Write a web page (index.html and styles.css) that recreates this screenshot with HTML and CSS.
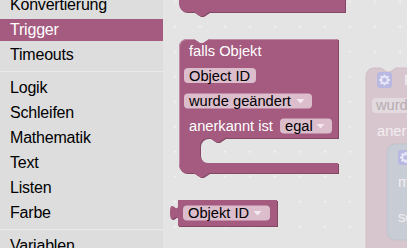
FILE: index.html
```html
<!DOCTYPE html>
<html lang="de">
<head>
    <meta charset="UTF-8">
    <title>Skript-Editor</title>
    <link rel="stylesheet" href="styles.css">
</head>
<body>
    <div class="editor">
        <div class="toolbox">
            <div class="tree">
                <div class="row">Konvertierung</div>
                <div class="row selected">Trigger</div>
                <div class="row">Timeouts</div>
                <div class="sep"></div>
                <div class="row">Logik</div>
                <div class="row">Schleifen</div>
                <div class="row">Mathematik</div>
                <div class="row">Text</div>
                <div class="row">Listen</div>
                <div class="row">Farbe</div>
                <div class="sep"></div>
                <div class="row">Variablen</div>
            </div>
        </div>

        <div class="workspace">
            <svg class="canvas" width="244" height="248" viewBox="163 0 244 248">
                <defs>
                    <pattern id="grid" patternUnits="userSpaceOnUse" x="162.5" y="14.2" width="25" height="25">
                        <path class="grid-line" d="M11 12.5H14M12.5 11V14"/>
                    </pattern>
                </defs>
                <rect x="163" y="0" width="244" height="248" fill="url(#grid)"/>

                <!-- block cut off at the top -->
                <path class="dark" transform="translate(1,1)" d="M179 -10V4a8 8 0 0 0 8 8H194l6 4 3 0 6-4H345V-10Z"/>
                <path class="block" d="M179 -10V4a8 8 0 0 0 8 8H194l6 4 3 0 6-4H345V-10Z"/>

                <!-- falls Objekt -->
                <path class="dark" transform="translate(1,1)" d="M179 47a8 8 0 0 1 8-8H194l6 4 3 0 6-4H338V138H225l-6 4-3 0-6-4H208a8 8 0 0 0-8 8V155a8 8 0 0 0 8 8H338V173H209l-6 4-3 0-6-4H187a8 8 0 0 1-8-8Z"/>
                <path class="block" d="M179 47a8 8 0 0 1 8-8H194l6 4 3 0 6-4H338V138H225l-6 4-3 0-6-4H208a8 8 0 0 0-8 8V155a8 8 0 0 0 8 8H338V173H209l-6 4-3 0-6-4H187a8 8 0 0 1-8-8Z"/>
                <path class="light" d="M179.5 165V47a7.5 7.5 0 0 1 7.5-7.5H194M209.5 39.5H337.5"/>

                <text class="label" x="189" y="56">falls Objekt</text>

                <rect class="field" x="184" y="68" width="72" height="15" rx="4"/>
                <text class="value" x="189" y="80.5">Object ID</text>

                <rect class="field" x="184" y="93.5" width="128" height="15" rx="4"/>
                <text class="value" x="189" y="106">wurde geändert</text>
                <path class="arrow" d="M296.5 99h8l-4 4.5z"/>

                <text class="label" x="189" y="131">anerkannt ist</text>
                <rect class="field" x="280" y="118.5" width="52" height="15" rx="4"/>
                <text class="value" x="285" y="131">egal</text>
                <path class="arrow" d="M316.5 124h8l-4 4.5z"/>

                <!-- Objekt ID value block -->
                <path class="dark" transform="translate(1,1)" d="M178 200H277V226H178V220c0-10-8 8-8-7.5s8 2.5 8-7.5Z"/>
                <path class="block" d="M178 200H277V226H178V220c0-10-8 8-8-7.5s8 2.5 8-7.5Z"/>
                <rect class="field" x="183" y="205.5" width="87" height="15" rx="4"/>
                <text class="value" x="188" y="218">Objekt ID</text>
                <path class="arrow" d="M253.5 211h8l-4 4.5z"/>

                <!-- faded block on the right -->
                <path class="ghost" d="M366 76a8 8 0 0 1 8-8H381l6 4 3 0 6-4H420V260H366Z"/>
                <rect class="ghost-icon" x="377" y="72" width="15" height="16" rx="3"/>
                <g class="gear" transform="translate(384.5,80)">
                    <circle r="3.2"/>
                    <path d="M0-5.5V-3.5M0 5.5V3.5M-5.5 0H-3.5M5.5 0H3.5M-3.9-3.9L-2.5-2.5M3.9 3.9L2.5 2.5M-3.9 3.9L-2.5 2.5M3.9-3.9L2.5-2.5"/>
                </g>
                <text class="ghost-label" x="404" y="85">F</text>
                <rect class="ghost-field" x="372" y="98" width="50" height="15" rx="4"/>
                <text class="ghost-value" x="376" y="110">wurde</text>
                <text class="ghost-label" x="377" y="136">aner</text>

                <path class="ghost-inner" d="M387 152a8 8 0 0 1 8-8H420V240H395a8 8 0 0 1-8-8Z"/>
                <rect class="ghost-icon" x="398" y="150" width="15" height="15" rx="3"/>
                <g class="gear" transform="translate(405.5,157.5)">
                    <circle r="3.2"/>
                    <path d="M0-5.5V-3.5M0 5.5V3.5M-5.5 0H-3.5M5.5 0H3.5M-3.9-3.9L-2.5-2.5M3.9 3.9L2.5 2.5M-3.9 3.9L-2.5 2.5M3.9-3.9L2.5-2.5"/>
                </g>
                <text class="ghost-label" x="398" y="187">m</text>
                <text class="ghost-label" x="398" y="222">so</text>
            </svg>
        </div>
    </div>
</body>
</html>
```

FILE: styles.css
```css
body {
    margin: 0;
    padding: 0;
    overflow: hidden;
    font-family: "Liberation Sans", Arial, sans-serif;
}
.editor {
    display: flex;
    width: 407px;
    height: 248px;
    overflow: hidden;
}
.toolbox {
    width: 163px;
    flex: none;
    background-color: #dddddd;
    overflow: hidden;
}
.tree {
    margin-top: -6px;
}
.row {
    height: 22px;
    line-height: 22px;
    margin-bottom: 3px;
    padding-left: 10px;
    font-size: 16px;
    letter-spacing: -0.2px;
    color: #000;
    white-space: nowrap;
}
.row.selected {
    background-color: #a55b80;
    color: #fff;
}
.sep {
    height: 0;
    margin: 5px 0;
    border-bottom: 1px solid #e9e9e9;
}
.workspace {
    flex: 1;
    background-color: #e4e4e4;
    overflow: hidden;
}
.canvas {
    display: block;
}
.grid-line {
    stroke: #f0f0f0;
    stroke-width: 1;
    fill: none;
}
.block { fill: #a55b80; }
.dark { fill: #834863; }
.light {
    fill: none;
    stroke: #c08ca6;
    stroke-width: 1;
}
.label, .value, .ghost-label, .ghost-value {
    font-family: "Liberation Sans", Arial, sans-serif;
    font-size: 14.67px;
}
.label { fill: #fff; }
.value { fill: #000; }
.field { fill: #dbbdcc; }
.arrow { fill: #f4e8ee; }
.ghost {
    fill: #d8c6cf;
    stroke: #d0bcc6;
}
.ghost-inner {
    fill: #c8ccd5;
    stroke: #bfc3cc;
}
.ghost-icon { fill: #b9b8e2; }
.gear circle {
    fill: none;
    stroke: #e6e6f6;
    stroke-width: 2;
}
.gear path {
    stroke: #e6e6f6;
    stroke-width: 2;
}
.ghost-label { fill: #f3eef1; }
.ghost-field { fill: #e3dadf; }
.ghost-value { fill: #b5adb1; }
```
